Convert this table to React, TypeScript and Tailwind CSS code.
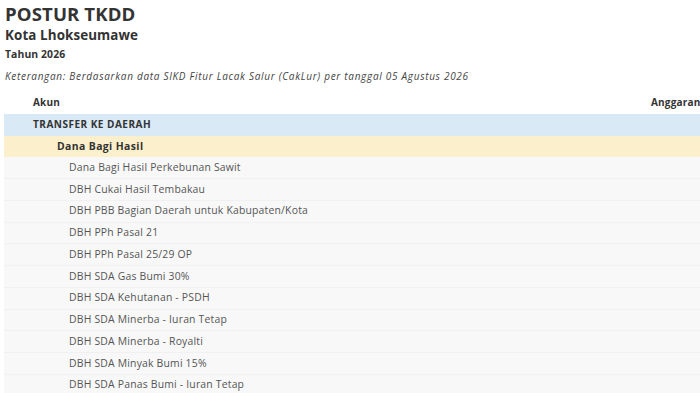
import React from "react";

const items = [
  "Dana Bagi Hasil Perkebunan Sawit",
  "DBH Cukai Hasil Tembakau",
  "DBH PBB Bagian Daerah untuk Kabupaten/Kota",
  "DBH PPh Pasal 21",
  "DBH PPh Pasal 25/29 OP",
  "DBH SDA Gas Bumi 30%",
  "DBH SDA Kehutanan - PSDH",
  "DBH SDA Minerba - Iuran Tetap",
  "DBH SDA Minerba - Royalti",
  "DBH SDA Minyak Bumi 15%",
  "DBH SDA Panas Bumi - Iuran Tetap",
];

export default function App() {
  return (
    <div
      className="w-[700px] h-[393px] overflow-hidden bg-white text-[#333]"
      style={{ fontFamily: '"Open Sans", "Noto Sans", sans-serif' }}
    >
      <div className="pl-[5px] pt-[2px]">
        <h1 className="text-[18.6px] font-bold leading-[24px] tracking-[0.1px] text-[#333]">POSTUR TKDD</h1>
        <h2 className="mt-[1px] text-[13.4px] font-bold leading-[16px] tracking-[0.1px] text-[#333]">Kota Lhokseumawe</h2>
        <div className="mt-[4px] text-[10.4px] font-bold leading-[14px] tracking-[0.1px] text-[#333]">Tahun 2026</div>
        <div className="mt-[8px] text-[10px] italic leading-[14px] tracking-[0.7px] text-[#444]">
          Keterangan: Berdasarkan data SIKD Fitur Lacak Salur (CakLur) per tanggal 05 Agustus 2026
        </div>
      </div>
      <div className="ml-[4px] mt-[9px] w-[720px]">
        <div className="flex h-[21.8px] items-center text-[10px] font-bold tracking-[0.2px] text-[#333]">
          <div className="pl-[29px] flex-1">Akun</div>
          <div className="w-[73px]">Anggaran</div>
        </div>
        <div className="flex h-[21.8px] items-center bg-[#dae9f6] text-[10px] font-bold tracking-[0.5px] text-[#333]">
          <div className="pl-[29px]">TRANSFER KE DAERAH</div>
        </div>
        <div className="flex h-[21.8px] items-center bg-[#fbf0cb] text-[10.4px] font-bold tracking-[0.4px] text-[#333]">
          <div className="pl-[53px]">Dana Bagi Hasil</div>
        </div>
        {items.map((t) => (
          <div
            key={t}
            className="flex h-[21.75px] items-center bg-[#f8f8f8] border-b border-[#f1f1f1] text-[10.4px] tracking-[0.2px] text-[#555]"
          >
            <div className="pl-[65px]">{t}</div>
          </div>
        ))}
      </div>
    </div>
  );
}
